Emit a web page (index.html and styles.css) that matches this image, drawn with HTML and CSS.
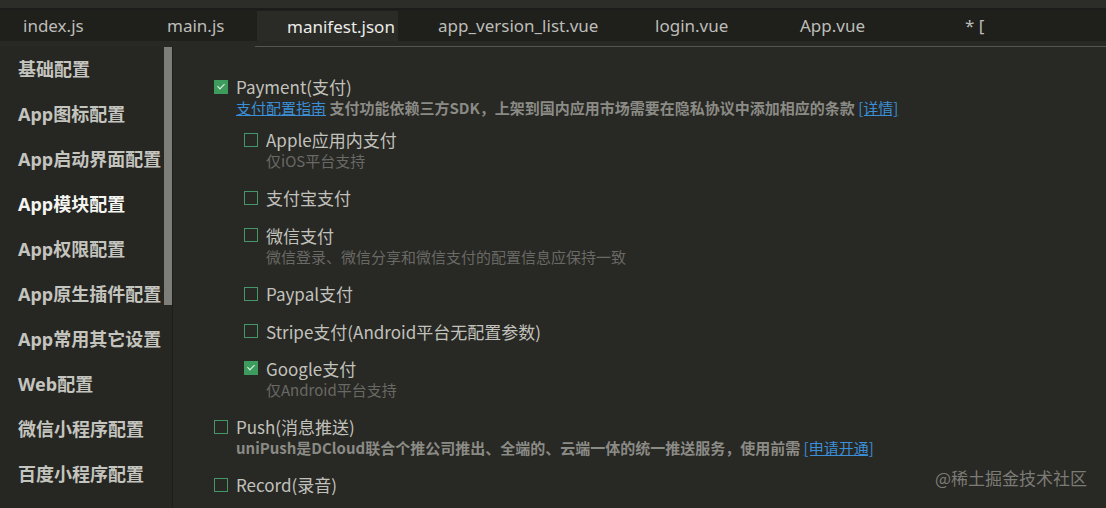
FILE: index.html
```html
<!DOCTYPE html>
<html lang="zh-CN">
<head>
  <meta charset="UTF-8">
  <meta name="viewport" content="width=device-width, initial-scale=1.0">
  <title>manifest.json</title>
  <link rel="stylesheet" href="styles.css">
</head>
<body>
  <div class="window">
    <div class="titlebar"></div>

    <div class="tabs">
      <div class="tab tab-index">index.js</div>
      <div class="tab tab-main">main.js</div>
      <div class="tab tab-manifest active">manifest.json</div>
      <div class="tab tab-version">app_version_list.vue</div>
      <div class="tab tab-login">login.vue</div>
      <div class="tab tab-app">App.vue</div>
      <div class="tab tab-new">* [</div>
    </div>

    <div class="toolbar"><div class="toolbar-line"></div></div>

    <div class="editor">
      <div class="sidebar">
        <ul class="nav">
          <li>基础配置</li>
          <li>App图标配置</li>
          <li>App启动界面配置</li>
          <li class="current">App模块配置</li>
          <li>App权限配置</li>
          <li>App原生插件配置</li>
          <li>App常用其它设置</li>
          <li>Web配置</li>
          <li>微信小程序配置</li>
          <li>百度小程序配置</li>
        </ul>
        <div class="scroll-track"><div class="scroll-thumb"></div></div>
      </div>

      <div class="content">
        <div class="module">
          <label class="row"><span class="check checked"></span>Payment(支付)</label>
          <div class="desc"><a href="#">支付配置指南</a> 支付功能依赖三方SDK，上架到国内应用市场需要在隐私协议中添加相应的条款 <a href="#">[详情]</a></div>

          <div class="sub-list">
            <div class="sub">
              <label class="row"><span class="check"></span>Apple应用内支付</label>
              <div class="note">仅iOS平台支持</div>
            </div>
            <div class="sub">
              <label class="row"><span class="check"></span>支付宝支付</label>
            </div>
            <div class="sub">
              <label class="row"><span class="check"></span>微信支付</label>
              <div class="note">微信登录、微信分享和微信支付的配置信息应保持一致</div>
            </div>
            <div class="sub">
              <label class="row"><span class="check"></span>Paypal支付</label>
            </div>
            <div class="sub">
              <label class="row"><span class="check"></span>Stripe支付(Android平台无配置参数)</label>
            </div>
            <div class="sub">
              <label class="row"><span class="check checked"></span>Google支付</label>
              <div class="note">仅Android平台支持</div>
            </div>
          </div>
        </div>

        <div class="module">
          <label class="row"><span class="check"></span>Push(消息推送)</label>
          <div class="desc">uniPush是DCloud联合个推公司推出、全端的、云端一体的统一推送服务，使用前需 <a href="#">[申请开通]</a></div>
        </div>

        <div class="module">
          <label class="row"><span class="check"></span>Record(录音)</label>
        </div>

        <div class="watermark">@稀土掘金技术社区</div>
      </div>
    </div>
  </div>
</body>
</html>
```

FILE: styles.css
```css
* {
  margin: 0;
  padding: 0;
  box-sizing: border-box;
}

body {
  width: 1106px;
  height: 508px;
  overflow: hidden;
  background-color: #282824;
  font-family: "Noto Sans", "Noto Sans CJK SC", sans-serif;
  color: #c2c2bd;
}

.window {
  display: flex;
  flex-direction: column;
  height: 100%;
}

.titlebar {
  height: 10px;
  background-color: #2c2c29;
  border-bottom: 2px solid #1c1c1a;
}

/* tabs */
.tabs {
  display: flex;
  height: 31px;
  background-color: #1f1f1c;
}

.tab {
  height: 100%;
  font-size: 17px;
  line-height: 31px;
  color: #bdbdb8;
  white-space: nowrap;
}

.tab-index { width: 144px; padding-left: 23px; }
.tab-main { width: 113px; padding-left: 23px; }
.tab-manifest { width: 141px; padding-left: 30px; }
.tab-version { width: 227px; padding-left: 40px; }
.tab-login { width: 145px; padding-left: 30px; }
.tab-app { width: 165px; padding-left: 30px; }
.tab-new { flex: 1; padding-left: 30px; }

.tab.active {
  margin-top: 1px;
  background-color: #2a2a26;
  color: #ecece8;
}

.toolbar {
  height: 6px;
  background-color: #282824;
}

.toolbar-line {
  margin-left: 255px;
  height: 6px;
  border-bottom: 1px solid #55554f;
}

/* editor */
.editor {
  flex: 1;
  display: flex;
  min-height: 0;
}

.sidebar {
  display: flex;
  width: 173px;
  background-color: #262622;
  border-right: 1px solid #1d1d1b;
}

.nav {
  list-style: none;
  width: 164px;
  overflow: hidden;
}

.nav li {
  height: 45px;
  line-height: 45px;
  padding-left: 18px;
  font-size: 18px;
  font-weight: 700;
  color: #c4c4bf;
  white-space: nowrap;
}

.nav li.current {
  color: #f4f4f0;
}

.scroll-track {
  width: 8px;
}

.scroll-thumb {
  height: 258px;
  background-color: #7d7d79;
}

.content {
  position: relative;
  flex: 1;
  padding: 29px 0 0 41px;
  font-family: "Noto Sans CJK SC", sans-serif;
}

.module {
  margin-bottom: 16px;
}

.row {
  display: flex;
  align-items: center;
  height: 21px;
  font-size: 17px;
  color: #c2c2bd;
  white-space: nowrap;
}

.check {
  flex-shrink: 0;
  width: 14px;
  height: 14px;
  margin-right: 8px;
  border: 1.5px solid #45976a;
  position: relative;
}

.check.checked {
  background-color: #3d9c5d;
  border-color: #3d9c5d;
}

.check.checked::after {
  content: "";
  position: absolute;
  left: 3.5px;
  top: 1px;
  width: 3px;
  height: 6px;
  border-right: 1.5px solid #e8f4ec;
  border-bottom: 1.5px solid #e8f4ec;
  transform: rotate(45deg);
}

.desc {
  height: 21px;
  line-height: 21px;
  padding-left: 22px;
  font-size: 15px;
  font-weight: 700;
  color: #8b8b86;
  white-space: nowrap;
}

.desc a {
  color: #3b8fd8;
  font-weight: 400;
  text-decoration: underline;
}

.sub-list {
  margin-top: 11px;
  padding-left: 30px;
}

.sub {
  margin-bottom: 16.4px;
}

.note {
  height: 21px;
  line-height: 21px;
  padding-left: 22px;
  font-size: 15px;
  color: #696965;
  white-space: nowrap;
}

.watermark {
  position: absolute;
  right: 19px;
  bottom: 18px;
  font-size: 17px;
  color: #85857f;
  opacity: 0.9;
}
```
